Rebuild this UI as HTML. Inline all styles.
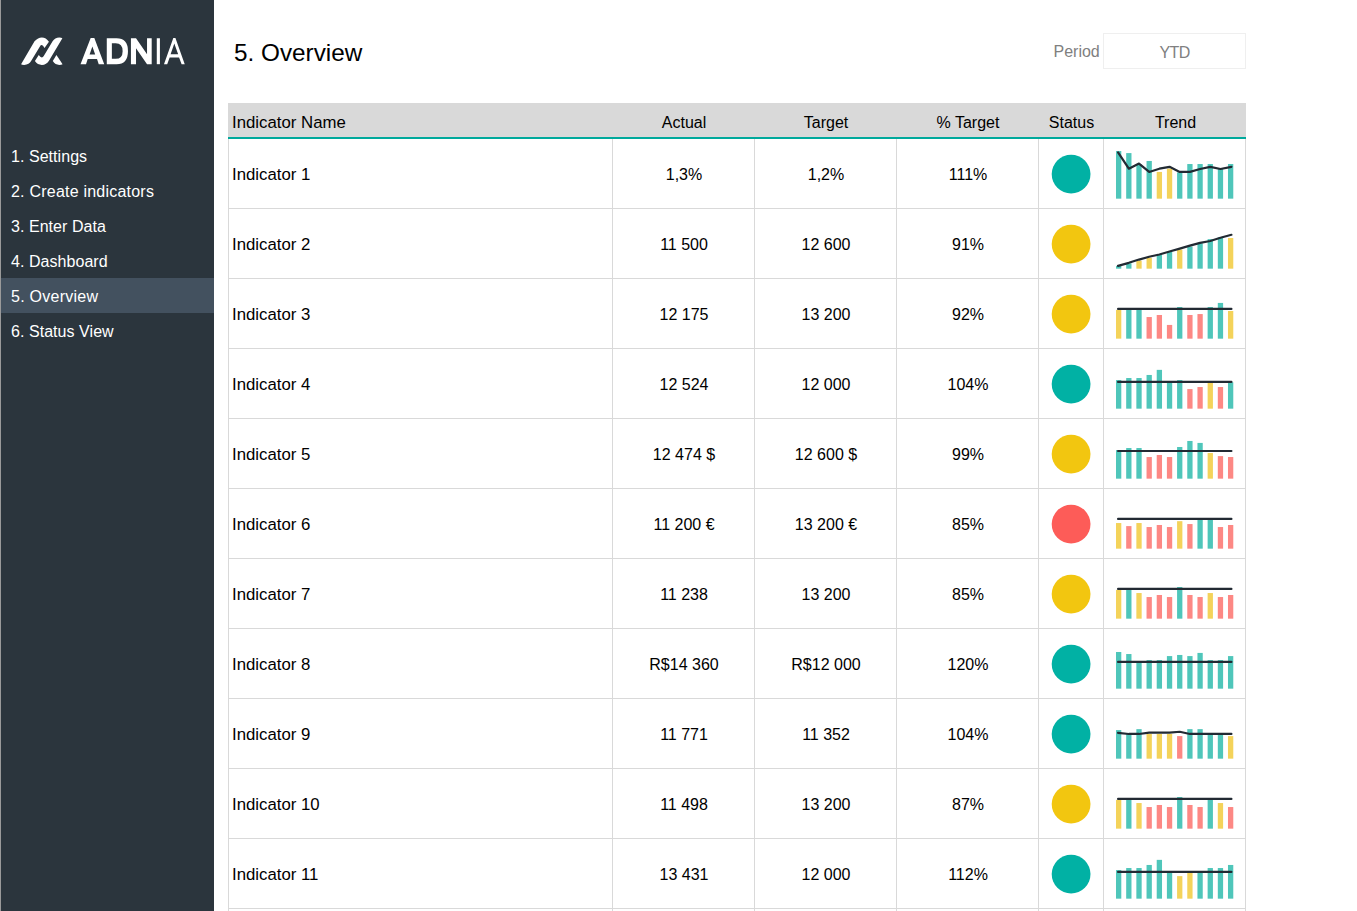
<!DOCTYPE html>
<html><head><meta charset="utf-8">
<style>
html,body{margin:0;padding:0;}
body{width:1357px;height:911px;overflow:hidden;background:#fff;position:relative;font-family:"Liberation Sans",sans-serif;color:#000;}
.a{position:absolute;white-space:nowrap;}
#side{position:absolute;left:0;top:0;width:214px;height:911px;background:#2b353d;}
#edge{position:absolute;left:0;top:0;width:1px;height:911px;background:#9a9a9a;}
.nav{position:absolute;left:11px;width:203px;height:35px;line-height:38px;color:#fff;font-size:16px;}
.nav.sel{left:1px;width:213px;padding-left:10px;box-sizing:border-box;background:#43515f;}
.hd{position:absolute;top:103px;height:34px;line-height:39px;font-size:16px;text-align:center;}
.cell{position:absolute;height:69px;line-height:72px;font-size:16px;text-align:center;}
.dot{position:absolute;width:39px;height:39px;border-radius:50%;}
</style></head><body>
<div id="side"></div><div id="edge"></div>

<svg class="a" style="left:18px;top:33px" width="50" height="35" viewBox="0 0 1301 911">
<path fill="#fff" d="M80,815 L430,215 Q520,115 620,115 Q730,115 805,225 L690,390 Q650,315 615,315 Q590,315 570,350 L345,725 Q290,830 160,830 Q100,830 80,815 Z"/>
<path fill="#fff" d="M440,730 L540,570 Q580,635 620,635 Q650,635 670,600 L900,215 Q960,115 1075,115 Q1130,115 1155,135 L810,715 Q740,830 620,830 Q510,830 440,730 Z"/>
<path fill="#fff" d="M905,730 L1000,570 L1160,815 Q1130,830 1075,830 Q970,830 905,730 Z"/>
</svg>
<svg class="a" style="left:75px;top:33px" width="115" height="35" viewBox="0 0 1357 413">
<path fill="#fff" fill-rule="evenodd" d="M65,368 L185,58 L228,58 L345,368 L280,368 L260,308 L150,308 L130,368 Z M172,255 L238,255 L205,160 Z"/>
<path fill="#fff" fill-rule="evenodd" d="M375,62 L490,62 Q625,62 625,215 Q625,368 490,368 L375,368 Z M435,122 L480,122 Q562,122 562,215 Q562,305 480,305 L435,305 Z"/>
<path fill="#fff" d="M660,62 L720,62 L850,250 L850,62 L905,62 L905,368 L850,368 L720,180 L720,368 L660,368 Z"/>
<rect fill="#fff" x="965" y="62" width="37" height="306"/>
<path fill="#fff" fill-rule="evenodd" d="M1050,368 L1160,60 L1185,60 L1295,368 L1258,368 L1228,288 L1117,288 L1088,368 Z M1128,252 L1217,252 L1172,125 Z"/>
</svg>

<div class="nav" style="top:138px;letter-spacing:0.05px;">1. Settings</div>
<div class="nav" style="top:173px;letter-spacing:0.22px;">2. Create indicators</div>
<div class="nav" style="top:208px;letter-spacing:0.05px;">3. Enter Data</div>
<div class="nav" style="top:243px;letter-spacing:0.05px;">4. Dashboard</div>
<div class="nav sel" style="top:278px;letter-spacing:0.25px;">5. Overview</div>
<div class="nav" style="top:313px;letter-spacing:0.05px;">6. Status View</div>
<div class="a" style="left:234px;top:37px;font-size:24.3px;line-height:32px;">5. Overview</div>
<div class="a" style="left:1053.5px;top:42.2px;font-size:16px;line-height:20px;color:#808080;">Period</div>
<div class="a" style="left:1103px;top:33px;width:141px;height:34px;border:1px solid #efefef;"></div>
<div class="a" style="left:1104px;top:42.5px;width:141px;text-align:center;font-size:16px;letter-spacing:-0.6px;line-height:20px;color:#808080;">YTD</div>
<div class="a" style="left:228px;top:103px;width:1018px;height:34px;background:#d9d9d9;"></div>
<div class="a" style="left:228px;top:137px;width:1018px;height:2px;background:#00a99c;"></div>
<div class="hd" style="left:232px;text-align:left;font-size:16.8px">Indicator Name</div>
<div class="hd" style="left:613px;width:142px">Actual</div>
<div class="hd" style="left:755px;width:142px">Target</div>
<div class="hd" style="left:897px;width:142px">% Target</div>
<div class="hd" style="left:1039px;width:65px">Status</div>
<div class="hd" style="left:1104px;width:143px">Trend</div>
<div class="a" style="left:228px;top:139px;width:1px;height:772px;background:#d9d9d9;"></div>
<div class="a" style="left:612px;top:139px;width:1px;height:772px;background:#d9d9d9;"></div>
<div class="a" style="left:754px;top:139px;width:1px;height:772px;background:#d9d9d9;"></div>
<div class="a" style="left:896px;top:139px;width:1px;height:772px;background:#d9d9d9;"></div>
<div class="a" style="left:1038px;top:139px;width:1px;height:772px;background:#d9d9d9;"></div>
<div class="a" style="left:1103px;top:139px;width:1px;height:772px;background:#d9d9d9;"></div>
<div class="a" style="left:1245px;top:139px;width:1px;height:772px;background:#d9d9d9;"></div>
<div class="a" style="left:228px;top:208px;width:1018px;height:1px;background:#d9d9d9;"></div>
<div class="a" style="left:228px;top:278px;width:1018px;height:1px;background:#d9d9d9;"></div>
<div class="a" style="left:228px;top:348px;width:1018px;height:1px;background:#d9d9d9;"></div>
<div class="a" style="left:228px;top:418px;width:1018px;height:1px;background:#d9d9d9;"></div>
<div class="a" style="left:228px;top:488px;width:1018px;height:1px;background:#d9d9d9;"></div>
<div class="a" style="left:228px;top:558px;width:1018px;height:1px;background:#d9d9d9;"></div>
<div class="a" style="left:228px;top:628px;width:1018px;height:1px;background:#d9d9d9;"></div>
<div class="a" style="left:228px;top:698px;width:1018px;height:1px;background:#d9d9d9;"></div>
<div class="a" style="left:228px;top:768px;width:1018px;height:1px;background:#d9d9d9;"></div>
<div class="a" style="left:228px;top:838px;width:1018px;height:1px;background:#d9d9d9;"></div>
<div class="a" style="left:228px;top:908px;width:1018px;height:1px;background:#d9d9d9;"></div>
<div class="cell" style="left:232px;top:139px;text-align:left;font-size:16.8px">Indicator 1</div>
<div class="cell" style="left:613px;top:139px;width:142px">1,3%</div>
<div class="cell" style="left:755px;top:139px;width:142px">1,2%</div>
<div class="cell" style="left:897px;top:139px;width:142px">111%</div>
<div class="cell" style="left:232px;top:209px;text-align:left;font-size:16.8px">Indicator 2</div>
<div class="cell" style="left:613px;top:209px;width:142px">11 500</div>
<div class="cell" style="left:755px;top:209px;width:142px">12 600</div>
<div class="cell" style="left:897px;top:209px;width:142px">91%</div>
<div class="cell" style="left:232px;top:279px;text-align:left;font-size:16.8px">Indicator 3</div>
<div class="cell" style="left:613px;top:279px;width:142px">12 175</div>
<div class="cell" style="left:755px;top:279px;width:142px">13 200</div>
<div class="cell" style="left:897px;top:279px;width:142px">92%</div>
<div class="cell" style="left:232px;top:349px;text-align:left;font-size:16.8px">Indicator 4</div>
<div class="cell" style="left:613px;top:349px;width:142px">12 524</div>
<div class="cell" style="left:755px;top:349px;width:142px">12 000</div>
<div class="cell" style="left:897px;top:349px;width:142px">104%</div>
<div class="cell" style="left:232px;top:419px;text-align:left;font-size:16.8px">Indicator 5</div>
<div class="cell" style="left:613px;top:419px;width:142px">12 474 $</div>
<div class="cell" style="left:755px;top:419px;width:142px">12 600 $</div>
<div class="cell" style="left:897px;top:419px;width:142px">99%</div>
<div class="cell" style="left:232px;top:489px;text-align:left;font-size:16.8px">Indicator 6</div>
<div class="cell" style="left:613px;top:489px;width:142px">11 200 €</div>
<div class="cell" style="left:755px;top:489px;width:142px">13 200 €</div>
<div class="cell" style="left:897px;top:489px;width:142px">85%</div>
<div class="cell" style="left:232px;top:559px;text-align:left;font-size:16.8px">Indicator 7</div>
<div class="cell" style="left:613px;top:559px;width:142px">11 238</div>
<div class="cell" style="left:755px;top:559px;width:142px">13 200</div>
<div class="cell" style="left:897px;top:559px;width:142px">85%</div>
<div class="cell" style="left:232px;top:629px;text-align:left;font-size:16.8px">Indicator 8</div>
<div class="cell" style="left:613px;top:629px;width:142px">R$14 360</div>
<div class="cell" style="left:755px;top:629px;width:142px">R$12 000</div>
<div class="cell" style="left:897px;top:629px;width:142px">120%</div>
<div class="cell" style="left:232px;top:699px;text-align:left;font-size:16.8px">Indicator 9</div>
<div class="cell" style="left:613px;top:699px;width:142px">11 771</div>
<div class="cell" style="left:755px;top:699px;width:142px">11 352</div>
<div class="cell" style="left:897px;top:699px;width:142px">104%</div>
<div class="cell" style="left:232px;top:769px;text-align:left;font-size:16.8px">Indicator 10</div>
<div class="cell" style="left:613px;top:769px;width:142px">11 498</div>
<div class="cell" style="left:755px;top:769px;width:142px">13 200</div>
<div class="cell" style="left:897px;top:769px;width:142px">87%</div>
<div class="cell" style="left:232px;top:839px;text-align:left;font-size:16.8px">Indicator 11</div>
<div class="cell" style="left:613px;top:839px;width:142px">13 431</div>
<div class="cell" style="left:755px;top:839px;width:142px">12 000</div>
<div class="cell" style="left:897px;top:839px;width:142px">112%</div>
<svg class="a" style="left:0;top:0" width="1357" height="911">
<circle cx="1071.1" cy="174.10" r="19.4" fill="#01B1A4"/>
<circle cx="1071.1" cy="244.10" r="19.4" fill="#F2C610"/>
<circle cx="1071.1" cy="314.10" r="19.4" fill="#F2C610"/>
<circle cx="1071.1" cy="384.10" r="19.4" fill="#01B1A4"/>
<circle cx="1071.1" cy="454.10" r="19.4" fill="#F2C610"/>
<circle cx="1071.1" cy="524.10" r="19.4" fill="#FD5C58"/>
<circle cx="1071.1" cy="594.10" r="19.4" fill="#F2C610"/>
<circle cx="1071.1" cy="664.10" r="19.4" fill="#01B1A4"/>
<circle cx="1071.1" cy="734.10" r="19.4" fill="#01B1A4"/>
<circle cx="1071.1" cy="804.10" r="19.4" fill="#F2C610"/>
<circle cx="1071.1" cy="874.10" r="19.4" fill="#01B1A4"/>
<rect x="1116.00" y="151.04" width="5.3" height="47.63" fill="#4FC6BA"/>
<rect x="1126.18" y="153.08" width="5.3" height="45.59" fill="#4FC6BA"/>
<rect x="1136.36" y="164.03" width="5.3" height="34.63" fill="#4FC6BA"/>
<rect x="1146.54" y="160.97" width="5.3" height="37.70" fill="#4FC6BA"/>
<rect x="1156.72" y="171.93" width="5.3" height="26.74" fill="#F4D35A"/>
<rect x="1166.90" y="168.68" width="5.3" height="29.99" fill="#F4D35A"/>
<rect x="1177.08" y="172.39" width="5.3" height="26.28" fill="#4FC6BA"/>
<rect x="1187.26" y="164.03" width="5.3" height="34.63" fill="#4FC6BA"/>
<rect x="1197.44" y="164.03" width="5.3" height="34.63" fill="#4FC6BA"/>
<rect x="1207.62" y="164.03" width="5.3" height="34.63" fill="#4FC6BA"/>
<rect x="1217.80" y="168.68" width="5.3" height="29.99" fill="#4FC6BA"/>
<rect x="1227.98" y="164.03" width="5.3" height="34.63" fill="#4FC6BA"/>
<polyline points="1118.05,152.43 1128.83,168.68 1139.01,163.57 1149.19,171.93 1159.37,168.68 1169.55,166.82 1179.73,171.93 1189.91,171.93 1200.09,168.96 1210.27,166.82 1220.45,168.96 1231.43,166.82" fill="none" stroke="#222a33" stroke-width="2.2" stroke-linejoin="round" stroke-linecap="round"/>
<rect x="1116.00" y="265.88" width="5.3" height="2.79" fill="#4FC6BA"/>
<rect x="1126.18" y="263.28" width="5.3" height="5.39" fill="#4FC6BA"/>
<rect x="1136.36" y="260.68" width="5.3" height="7.99" fill="#F4D35A"/>
<rect x="1146.54" y="257.90" width="5.3" height="10.77" fill="#F4D35A"/>
<rect x="1156.72" y="254.46" width="5.3" height="14.21" fill="#4FC6BA"/>
<rect x="1166.90" y="251.49" width="5.3" height="17.18" fill="#4FC6BA"/>
<rect x="1177.08" y="249.54" width="5.3" height="19.13" fill="#F4D35A"/>
<rect x="1187.26" y="246.57" width="5.3" height="22.10" fill="#4FC6BA"/>
<rect x="1197.44" y="243.32" width="5.3" height="25.35" fill="#4FC6BA"/>
<rect x="1207.62" y="239.14" width="5.3" height="29.53" fill="#4FC6BA"/>
<rect x="1217.80" y="237.28" width="5.3" height="31.38" fill="#4FC6BA"/>
<rect x="1227.98" y="238.03" width="5.3" height="30.64" fill="#F4D35A"/>
<polyline points="1118.05,265.88 1128.83,262.82 1139.01,259.57 1149.19,256.78 1159.37,254.46 1169.55,251.49 1179.73,248.61 1189.91,245.64 1200.09,242.86 1210.27,241.00 1220.45,237.75 1231.43,234.78" fill="none" stroke="#222a33" stroke-width="2.2" stroke-linejoin="round" stroke-linecap="round"/>
<rect x="1116.00" y="309.88" width="5.3" height="28.78" fill="#F4D35A"/>
<rect x="1126.18" y="309.33" width="5.3" height="29.34" fill="#4FC6BA"/>
<rect x="1136.36" y="309.33" width="5.3" height="29.34" fill="#4FC6BA"/>
<rect x="1146.54" y="317.03" width="5.3" height="21.63" fill="#FD8884"/>
<rect x="1156.72" y="314.99" width="5.3" height="23.68" fill="#FD8884"/>
<rect x="1166.90" y="324.93" width="5.3" height="13.74" fill="#FD8884"/>
<rect x="1177.08" y="307.01" width="5.3" height="31.66" fill="#4FC6BA"/>
<rect x="1187.26" y="314.99" width="5.3" height="23.68" fill="#FD8884"/>
<rect x="1197.44" y="314.06" width="5.3" height="24.61" fill="#FD8884"/>
<rect x="1207.62" y="307.01" width="5.3" height="31.66" fill="#4FC6BA"/>
<rect x="1217.80" y="302.92" width="5.3" height="35.75" fill="#4FC6BA"/>
<rect x="1227.98" y="311.00" width="5.3" height="27.67" fill="#F4D35A"/>
<polyline points="1118.05,308.96 1128.83,308.96 1139.01,308.96 1149.19,308.96 1159.37,308.96 1169.55,308.96 1179.73,308.96 1189.91,308.96 1200.09,308.96 1210.27,308.96 1220.45,308.96 1231.43,308.96" fill="none" stroke="#222a33" stroke-width="2.2" stroke-linejoin="round" stroke-linecap="round"/>
<rect x="1116.00" y="380.07" width="5.3" height="28.60" fill="#4FC6BA"/>
<rect x="1126.18" y="378.03" width="5.3" height="30.64" fill="#4FC6BA"/>
<rect x="1136.36" y="378.03" width="5.3" height="30.64" fill="#4FC6BA"/>
<rect x="1146.54" y="374.96" width="5.3" height="33.70" fill="#4FC6BA"/>
<rect x="1156.72" y="369.86" width="5.3" height="38.81" fill="#4FC6BA"/>
<rect x="1166.90" y="382.67" width="5.3" height="26.00" fill="#4FC6BA"/>
<rect x="1177.08" y="380.07" width="5.3" height="28.60" fill="#4FC6BA"/>
<rect x="1187.26" y="389.08" width="5.3" height="19.59" fill="#FD8884"/>
<rect x="1197.44" y="387.03" width="5.3" height="21.63" fill="#FD8884"/>
<rect x="1207.62" y="382.86" width="5.3" height="25.81" fill="#F4D35A"/>
<rect x="1217.80" y="387.03" width="5.3" height="21.63" fill="#FD8884"/>
<rect x="1227.98" y="382.21" width="5.3" height="26.46" fill="#4FC6BA"/>
<polyline points="1118.05,381.93 1128.83,381.93 1139.01,381.93 1149.19,381.93 1159.37,381.93 1169.55,381.93 1179.73,381.93 1189.91,381.93 1200.09,381.93 1210.27,381.93 1220.45,381.93 1231.43,381.93" fill="none" stroke="#222a33" stroke-width="2.2" stroke-linejoin="round" stroke-linecap="round"/>
<rect x="1116.00" y="450.07" width="5.3" height="28.60" fill="#4FC6BA"/>
<rect x="1126.18" y="448.03" width="5.3" height="30.64" fill="#4FC6BA"/>
<rect x="1136.36" y="448.03" width="5.3" height="30.64" fill="#4FC6BA"/>
<rect x="1146.54" y="457.03" width="5.3" height="21.63" fill="#FD8884"/>
<rect x="1156.72" y="454.99" width="5.3" height="23.68" fill="#FD8884"/>
<rect x="1166.90" y="457.03" width="5.3" height="21.63" fill="#FD8884"/>
<rect x="1177.08" y="447.01" width="5.3" height="31.66" fill="#4FC6BA"/>
<rect x="1187.26" y="440.97" width="5.3" height="37.70" fill="#4FC6BA"/>
<rect x="1197.44" y="442.92" width="5.3" height="35.75" fill="#4FC6BA"/>
<rect x="1207.62" y="453.04" width="5.3" height="25.63" fill="#F4D35A"/>
<rect x="1217.80" y="456.10" width="5.3" height="22.56" fill="#FD8884"/>
<rect x="1227.98" y="457.03" width="5.3" height="21.63" fill="#FD8884"/>
<polyline points="1118.05,451.00 1128.83,451.00 1139.01,451.00 1149.19,451.00 1159.37,451.00 1169.55,451.00 1179.73,451.00 1189.91,451.00 1200.09,451.00 1210.27,451.00 1220.45,451.00 1231.43,451.00" fill="none" stroke="#222a33" stroke-width="2.2" stroke-linejoin="round" stroke-linecap="round"/>
<rect x="1116.00" y="523.04" width="5.3" height="25.63" fill="#F4D35A"/>
<rect x="1126.18" y="526.10" width="5.3" height="22.56" fill="#FD8884"/>
<rect x="1136.36" y="523.04" width="5.3" height="25.63" fill="#F4D35A"/>
<rect x="1146.54" y="527.03" width="5.3" height="21.63" fill="#FD8884"/>
<rect x="1156.72" y="524.99" width="5.3" height="23.68" fill="#FD8884"/>
<rect x="1166.90" y="527.03" width="5.3" height="21.63" fill="#FD8884"/>
<rect x="1177.08" y="521.18" width="5.3" height="27.48" fill="#F4D35A"/>
<rect x="1187.26" y="524.06" width="5.3" height="24.61" fill="#FD8884"/>
<rect x="1197.44" y="519.33" width="5.3" height="29.34" fill="#4FC6BA"/>
<rect x="1207.62" y="519.33" width="5.3" height="29.34" fill="#4FC6BA"/>
<rect x="1217.80" y="527.03" width="5.3" height="21.63" fill="#FD8884"/>
<rect x="1227.98" y="524.99" width="5.3" height="23.68" fill="#FD8884"/>
<polyline points="1118.05,518.96 1128.83,518.96 1139.01,518.96 1149.19,518.96 1159.37,518.96 1169.55,518.96 1179.73,518.96 1189.91,518.96 1200.09,518.96 1210.27,518.96 1220.45,518.96 1231.43,518.96" fill="none" stroke="#222a33" stroke-width="2.2" stroke-linejoin="round" stroke-linecap="round"/>
<rect x="1116.00" y="589.88" width="5.3" height="28.78" fill="#F4D35A"/>
<rect x="1126.18" y="589.14" width="5.3" height="29.53" fill="#4FC6BA"/>
<rect x="1136.36" y="593.04" width="5.3" height="25.63" fill="#F4D35A"/>
<rect x="1146.54" y="597.03" width="5.3" height="21.63" fill="#FD8884"/>
<rect x="1156.72" y="594.99" width="5.3" height="23.68" fill="#FD8884"/>
<rect x="1166.90" y="597.03" width="5.3" height="21.63" fill="#FD8884"/>
<rect x="1177.08" y="587.01" width="5.3" height="31.66" fill="#4FC6BA"/>
<rect x="1187.26" y="594.99" width="5.3" height="23.68" fill="#FD8884"/>
<rect x="1197.44" y="597.03" width="5.3" height="21.63" fill="#FD8884"/>
<rect x="1207.62" y="593.04" width="5.3" height="25.63" fill="#F4D35A"/>
<rect x="1217.80" y="597.03" width="5.3" height="21.63" fill="#FD8884"/>
<rect x="1227.98" y="594.99" width="5.3" height="23.68" fill="#FD8884"/>
<polyline points="1118.05,588.96 1128.83,588.96 1139.01,588.96 1149.19,588.96 1159.37,588.96 1169.55,588.96 1179.73,588.96 1189.91,588.96 1200.09,588.96 1210.27,588.96 1220.45,588.96 1231.43,588.96" fill="none" stroke="#222a33" stroke-width="2.2" stroke-linejoin="round" stroke-linecap="round"/>
<rect x="1116.00" y="651.99" width="5.3" height="36.68" fill="#4FC6BA"/>
<rect x="1126.18" y="654.03" width="5.3" height="34.63" fill="#4FC6BA"/>
<rect x="1136.36" y="662.11" width="5.3" height="26.56" fill="#4FC6BA"/>
<rect x="1146.54" y="660.07" width="5.3" height="28.60" fill="#4FC6BA"/>
<rect x="1156.72" y="660.07" width="5.3" height="28.60" fill="#4FC6BA"/>
<rect x="1166.90" y="656.08" width="5.3" height="32.59" fill="#4FC6BA"/>
<rect x="1177.08" y="654.96" width="5.3" height="33.70" fill="#4FC6BA"/>
<rect x="1187.26" y="656.08" width="5.3" height="32.59" fill="#4FC6BA"/>
<rect x="1197.44" y="652.92" width="5.3" height="35.75" fill="#4FC6BA"/>
<rect x="1207.62" y="660.07" width="5.3" height="28.60" fill="#4FC6BA"/>
<rect x="1217.80" y="660.07" width="5.3" height="28.60" fill="#4FC6BA"/>
<rect x="1227.98" y="656.08" width="5.3" height="32.59" fill="#4FC6BA"/>
<polyline points="1118.05,661.93 1128.83,661.93 1139.01,661.93 1149.19,661.93 1159.37,661.93 1169.55,661.93 1179.73,661.93 1189.91,661.93 1200.09,661.93 1210.27,661.93 1220.45,661.93 1231.43,661.93" fill="none" stroke="#222a33" stroke-width="2.2" stroke-linejoin="round" stroke-linecap="round"/>
<rect x="1116.00" y="730.07" width="5.3" height="28.60" fill="#4FC6BA"/>
<rect x="1126.18" y="733.32" width="5.3" height="25.35" fill="#4FC6BA"/>
<rect x="1136.36" y="729.14" width="5.3" height="29.53" fill="#4FC6BA"/>
<rect x="1146.54" y="733.97" width="5.3" height="24.70" fill="#F4D35A"/>
<rect x="1156.72" y="733.97" width="5.3" height="24.70" fill="#F4D35A"/>
<rect x="1166.90" y="733.97" width="5.3" height="24.70" fill="#F4D35A"/>
<rect x="1177.08" y="736.10" width="5.3" height="22.56" fill="#FD8884"/>
<rect x="1187.26" y="729.14" width="5.3" height="29.53" fill="#4FC6BA"/>
<rect x="1197.44" y="729.14" width="5.3" height="29.53" fill="#4FC6BA"/>
<rect x="1207.62" y="733.97" width="5.3" height="24.70" fill="#4FC6BA"/>
<rect x="1217.80" y="733.97" width="5.3" height="24.70" fill="#4FC6BA"/>
<rect x="1227.98" y="736.10" width="5.3" height="22.56" fill="#F4D35A"/>
<polyline points="1118.05,732.86 1128.83,733.97 1139.01,733.97 1149.19,732.67 1159.37,732.67 1169.55,732.67 1179.73,731.74 1189.91,733.97 1200.09,733.97 1210.27,733.97 1220.45,733.97 1231.43,733.97" fill="none" stroke="#222a33" stroke-width="2.2" stroke-linejoin="round" stroke-linecap="round"/>
<rect x="1116.00" y="799.88" width="5.3" height="28.78" fill="#F4D35A"/>
<rect x="1126.18" y="799.14" width="5.3" height="29.53" fill="#4FC6BA"/>
<rect x="1136.36" y="803.04" width="5.3" height="25.63" fill="#F4D35A"/>
<rect x="1146.54" y="807.03" width="5.3" height="21.63" fill="#FD8884"/>
<rect x="1156.72" y="804.99" width="5.3" height="23.68" fill="#FD8884"/>
<rect x="1166.90" y="807.03" width="5.3" height="21.63" fill="#FD8884"/>
<rect x="1177.08" y="797.01" width="5.3" height="31.66" fill="#4FC6BA"/>
<rect x="1187.26" y="804.99" width="5.3" height="23.68" fill="#FD8884"/>
<rect x="1197.44" y="807.03" width="5.3" height="21.63" fill="#FD8884"/>
<rect x="1207.62" y="799.14" width="5.3" height="29.53" fill="#4FC6BA"/>
<rect x="1217.80" y="803.04" width="5.3" height="25.63" fill="#F4D35A"/>
<rect x="1227.98" y="807.03" width="5.3" height="21.63" fill="#FD8884"/>
<polyline points="1118.05,798.96 1128.83,798.96 1139.01,798.96 1149.19,798.96 1159.37,798.96 1169.55,798.96 1179.73,798.96 1189.91,798.96 1200.09,798.96 1210.27,798.96 1220.45,798.96 1231.43,798.96" fill="none" stroke="#222a33" stroke-width="2.2" stroke-linejoin="round" stroke-linecap="round"/>
<rect x="1116.00" y="870.07" width="5.3" height="28.60" fill="#4FC6BA"/>
<rect x="1126.18" y="868.03" width="5.3" height="30.64" fill="#4FC6BA"/>
<rect x="1136.36" y="868.03" width="5.3" height="30.64" fill="#4FC6BA"/>
<rect x="1146.54" y="864.96" width="5.3" height="33.70" fill="#4FC6BA"/>
<rect x="1156.72" y="859.86" width="5.3" height="38.81" fill="#4FC6BA"/>
<rect x="1166.90" y="872.39" width="5.3" height="26.28" fill="#4FC6BA"/>
<rect x="1177.08" y="876.10" width="5.3" height="22.56" fill="#F4D35A"/>
<rect x="1187.26" y="872.86" width="5.3" height="25.81" fill="#F4D35A"/>
<rect x="1197.44" y="872.39" width="5.3" height="26.28" fill="#4FC6BA"/>
<rect x="1207.62" y="868.03" width="5.3" height="30.64" fill="#4FC6BA"/>
<rect x="1217.80" y="868.03" width="5.3" height="30.64" fill="#4FC6BA"/>
<rect x="1227.98" y="864.96" width="5.3" height="33.70" fill="#4FC6BA"/>
<polyline points="1118.05,871.93 1128.83,871.93 1139.01,871.93 1149.19,871.93 1159.37,871.93 1169.55,871.93 1179.73,871.93 1189.91,871.93 1200.09,871.93 1210.27,871.93 1220.45,871.93 1231.43,871.93" fill="none" stroke="#222a33" stroke-width="2.2" stroke-linejoin="round" stroke-linecap="round"/>
</svg>
</body></html>
